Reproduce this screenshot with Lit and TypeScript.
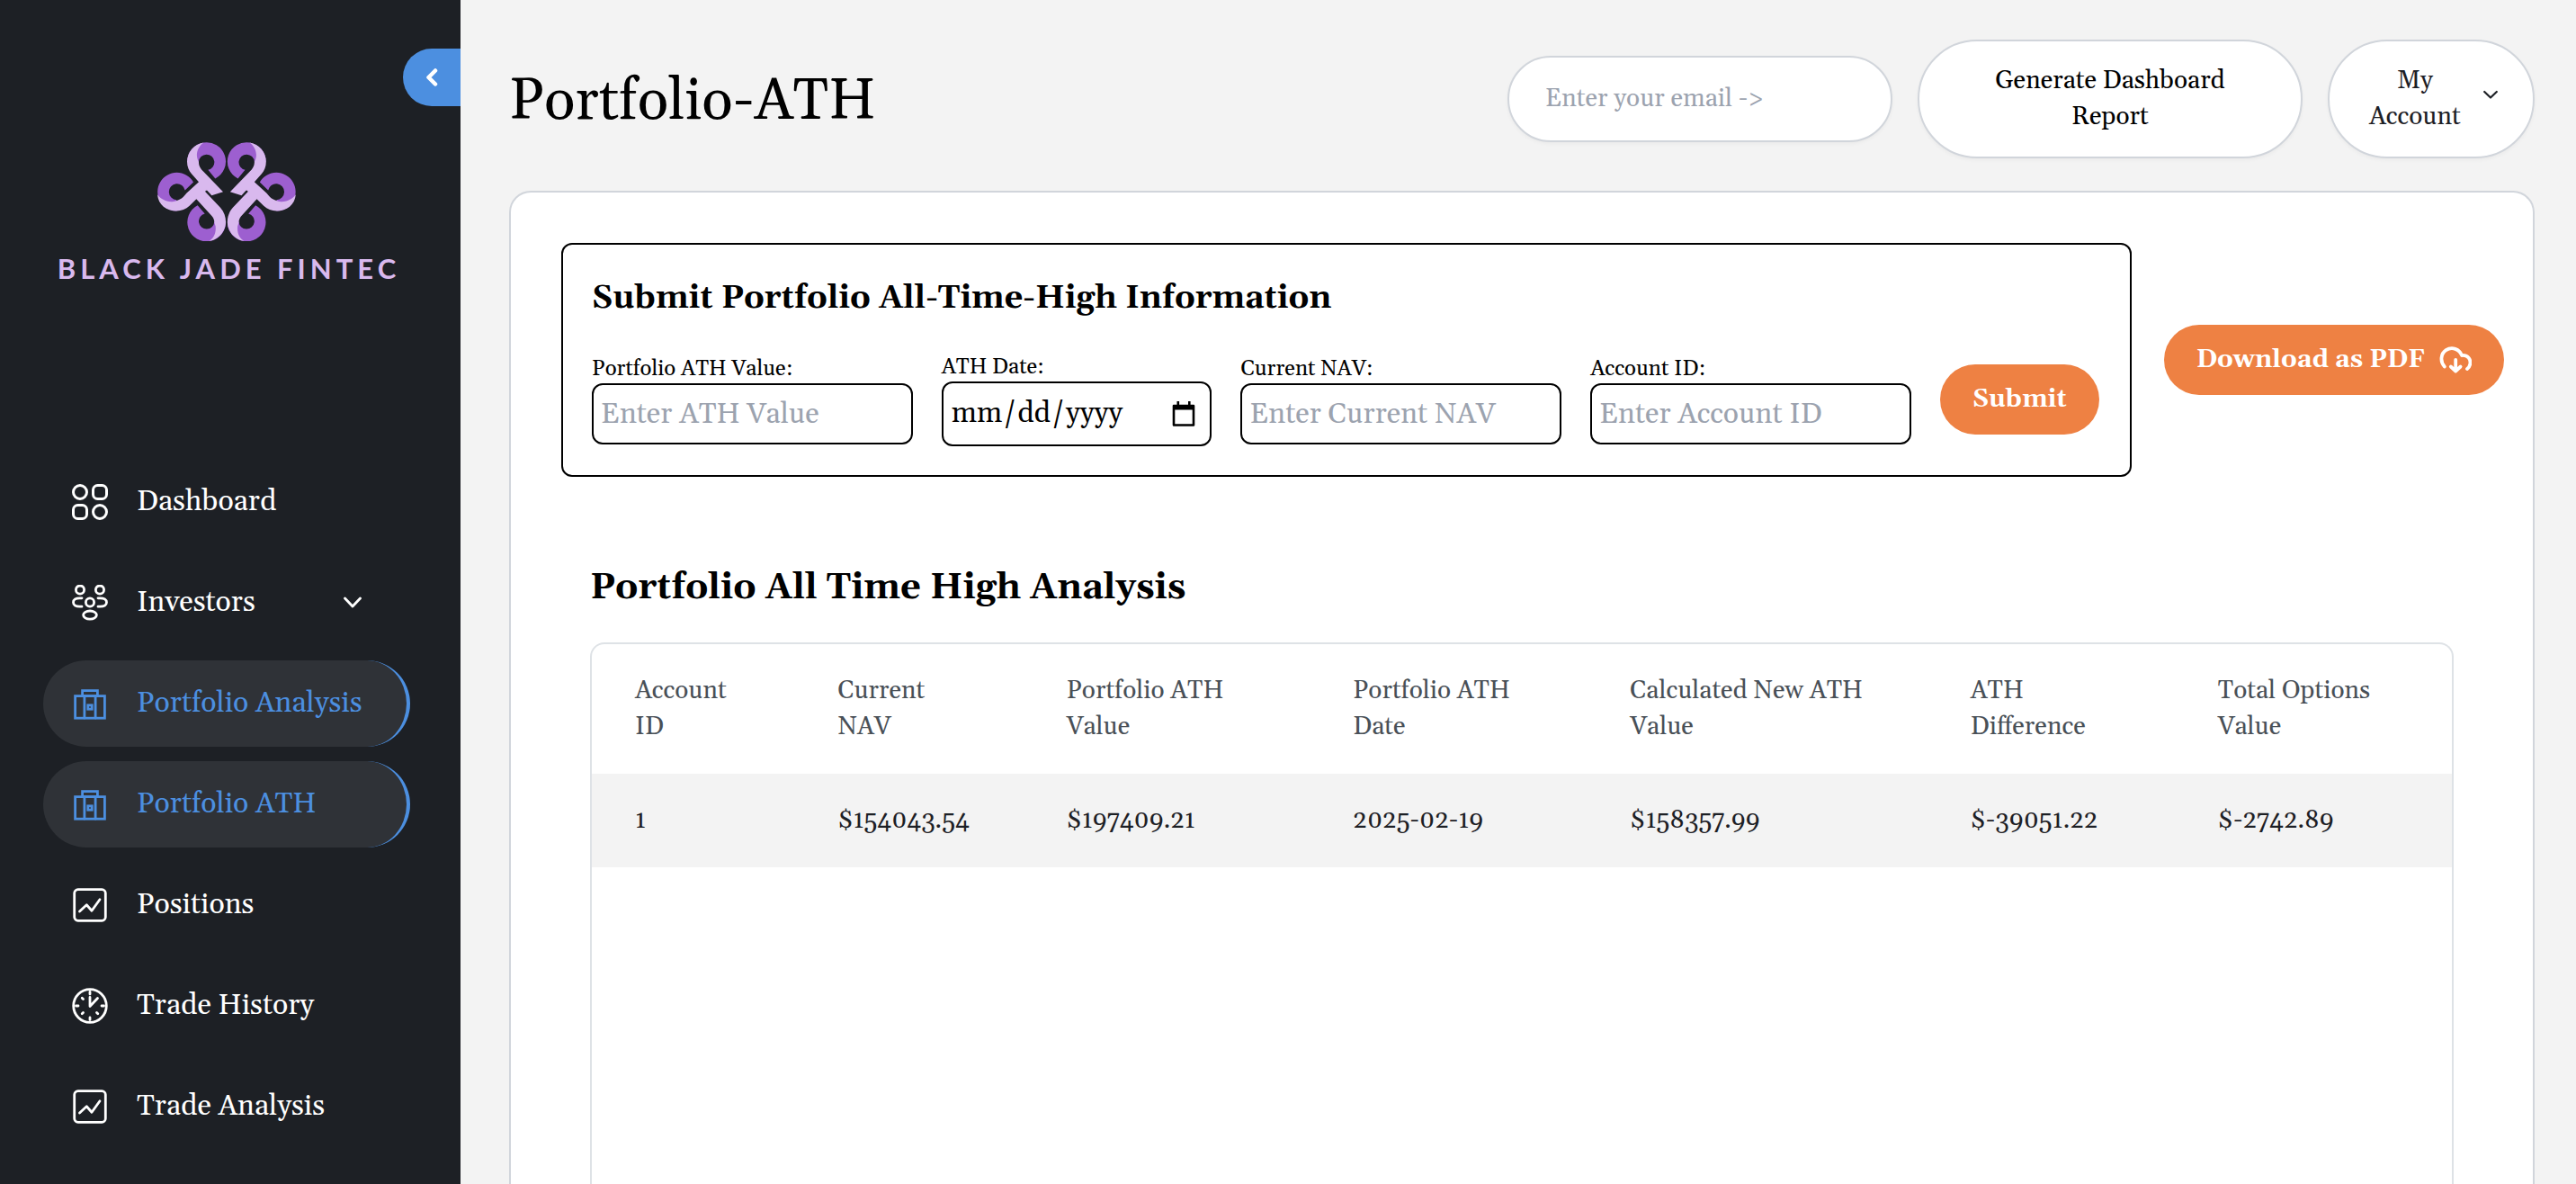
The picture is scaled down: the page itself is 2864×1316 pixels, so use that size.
import { LitElement, html, css, svg, nothing } from "lit";
import { customElement, state } from "lit/decorators.js";
import { classMap } from "lit/directives/class-map.js";

type IconName = "grid" | "people" | "briefcase" | "chart" | "clock";

interface NavItem {
  label: string;
  icon: IconName;
  active?: boolean;
  expandable?: boolean;
}

const NAV: NavItem[] = [
  { label: "Dashboard", icon: "grid" },
  { label: "Investors", icon: "people", expandable: true },
  { label: "Portfolio Analysis", icon: "briefcase", active: true },
  { label: "Portfolio ATH", icon: "briefcase", active: true },
  { label: "Positions", icon: "chart" },
  { label: "Trade History", icon: "clock" },
  { label: "Trade Analysis", icon: "chart" },
];

const ICONS = {
  grid: svg`
    <circle cx="9" cy="9" r="7.5"/>
    <rect x="23.5" y="1.5" width="15" height="15" rx="5"/>
    <rect x="1.5" y="23.5" width="15" height="15" rx="5"/>
    <circle cx="31" cy="31" r="7.5"/>`,
  people: svg`
    <circle cx="9" cy="5.6" r="4.6"/>
    <circle cx="31" cy="5.6" r="4.6"/>
    <circle cx="20" cy="19.5" r="4.6"/>
    <ellipse cx="20" cy="33.6" rx="7.4" ry="4.6"/>
    <path d="M11 14.8H8.5C4.5 14.8 1.5 16.5 1.5 19.5S4.5 24.2 8.5 24.2H11"/>
    <path d="M29 14.8H31.5C35.5 14.8 38.5 16.5 38.5 19.5S35.5 24.2 31.5 24.2H29"/>`,
  briefcase: svg`
    <rect x="3.6" y="11.6" width="32.8" height="24.6"/>
    <rect x="11.6" y="5.6" width="16.8" height="6"/>
    <path d="M13.9 11.6V36M26.1 11.6V36"/>
    <rect x="17.8" y="21.8" width="4.4" height="4.4"/>`,
  chart: svg`
    <rect x="2.7" y="2.7" width="34.6" height="34.6" rx="4"/>
    <path d="M8.5 27L16.3 19.8L22 26.2L31 13.8" stroke-linejoin="round"/>`,
  clock: svg`
    <circle cx="20" cy="20" r="18.3"/>
    <path d="M20 10.5V20.5L28.5 11.5" stroke-linejoin="round"/>
    <path d="M20 4.5V7M20 33V35.5M4.5 20H7M33 20H35.5M11.2 11.2L12.5 12.5M27.5 27.5L28.8 28.8M11.2 28.8L12.5 27.5"/>`,
};

const PETALS = svg`
  <path class="petal-dark" d="M175 119A64 64 0 1 1 268 175L244 146A26 26 0 1 0 213 119Z"/>
  <path class="petal-dark" d="M139 283A64 64 0 1 1 195 187L167 214A27 27 0 1 0 139 246Z"/>
  <path class="petal-dark" d="M209 264A64 64 0 1 0 303 319L265 319A26 26 0 1 1 233 292Z"/>
  <path class="petal-light" d="M229 55A65 65 0 0 0 174 119C174 136 180 149 189 159L213 186L172 224C164 234 158 241 150 244C144 246 136 253 122 252C100 250 86 242 75 228C78 262 105 283 139 283C155 283 170 277 182 266L205 243L257 300C262 306 265 312 265 322L269 334C271 356 264 372 248 383C280 378 303 350 303 319C303 303 298 287 285 272L235 219A4 4 0 0 1 241 215L256 231L294 219L228 151C219 142 212 132 213 119C200 98 208 70 229 55Z"/>`;

@customElement("side-nav")
export class SideNav extends LitElement {
  static styles = css`
    :host {
      display: flex;
      flex-direction: column;
      flex: 0 0 512px;
      box-sizing: border-box;
      padding-top: 54px;
      background: #1d2025;
      color: #fff;
      overflow: hidden;
    }
    .collapse {
      display: flex;
      align-items: center;
      justify-content: center;
      align-self: flex-end;
      width: 64px;
      height: 64px;
      padding: 0;
      border: 0;
      border-radius: 32px 0 0 32px;
      background: #4c8fe0;
      color: #fff;
    }
    .brand {
      display: flex;
      flex-direction: column;
      align-items: center;
      gap: 10px;
      padding: 40px 56px 0 48px;
      color: #d9b9ee;
      text-decoration: none;
    }
    .mark {
      width: 154px;
      height: 110px;
    }
    .petal-dark {
      fill: #9d5fd0;
    }
    .petal-light {
      fill: #d9b9ee;
    }
    .wordmark {
      padding-left: 5px;
      font: 700 31px/40px Lato, "Open Sans", sans-serif;
      letter-spacing: 5px;
      white-space: nowrap;
    }
    nav {
      display: flex;
      flex-direction: column;
      gap: 16px;
      padding: 192px 56px 0 48px;
    }
    .item {
      display: flex;
      align-items: center;
      gap: 32px;
      box-sizing: border-box;
      height: 96px;
      padding: 0 50px 0 32px;
      border-right: 4px solid transparent;
      border-radius: 48px;
      color: inherit;
      font-size: 32px;
      line-height: 48px;
      text-decoration: none;
      white-space: nowrap;
    }
    .item.active {
      background: #2f3237;
      border-right-color: #4c8fe0;
      color: #4c8fe0;
    }
    .label {
      flex: 1;
    }
    .icon {
      flex: none;
      width: 40px;
      height: 40px;
    }
    svg {
      display: block;
    }
  `;

  render() {
    return html`
      <button class="collapse" aria-label="Collapse sidebar">
        <svg width="14" height="20" viewBox="0 0 14 20" fill="none" stroke="currentColor" stroke-width="4.5" stroke-linecap="round" stroke-linejoin="round">
          <path d="M11 2.5L3.5 10L11 17.5"/>
        </svg>
      </button>
      <a class="brand" href="#">
        <svg class="mark" viewBox="75 54 462 329" aria-hidden="true">
          <g>${PETALS}</g>
          <g transform="translate(611.5 0) scale(-1 1)">${PETALS}</g>
        </svg>
        <span class="wordmark">BLACK JADE FINTEC</span>
      </a>
      <nav>
        ${NAV.map(
          (item) => html`
            <a class=${classMap({ item: true, active: !!item.active })} href="#">
              <svg class="icon" viewBox="0 0 40 40" fill="none" stroke="currentColor" stroke-width=${item.icon === "grid" ? 3 : 2.8} stroke-linecap="round" aria-hidden="true">
                ${ICONS[item.icon]}
              </svg>
              <span class="label">${item.label}</span>
              ${item.expandable
                ? html`<svg width="20" height="14" viewBox="0 0 20 14" fill="none" stroke="currentColor" stroke-width="2.8" stroke-linecap="round" stroke-linejoin="round" aria-hidden="true">
                    <path d="M1.5 2L10 11L18.5 2"/>
                  </svg>`
                : nothing}
            </a>
          `
        )}
      </nav>
    `;
  }
}

@customElement("page-header")
export class PageHeader extends LitElement {
  static styles = css`
    :host {
      display: flex;
      align-items: center;
      gap: 28px;
    }
    h1 {
      flex: 1;
      margin: 0;
      padding-top: 8px;
      font-size: 64px;
      font-weight: 400;
      line-height: 80px;
      white-space: nowrap;
    }
    .pill {
      box-sizing: border-box;
      border: 2px solid #d1d5db;
      border-radius: 66px;
      background: #fff;
      box-shadow: 0 2px 4px rgba(0, 0, 0, 0.04);
      color: #1d2025;
      font: inherit;
      font-size: 28px;
      line-height: 40px;
    }
    .email {
      width: 428px;
      height: 96px;
      padding: 0 40px;
      outline: none;
    }
    .email::placeholder {
      color: #9ca3af;
      opacity: 1;
    }
    .report {
      width: 428px;
      padding: 24px 64px;
      color: #000;
    }
    .account {
      display: flex;
      align-items: center;
      justify-content: space-between;
      width: 230px;
      padding: 24px 39px 24px 44px;
    }
    svg {
      display: block;
    }
  `;

  render() {
    return html`
      <h1>Portfolio-ATH</h1>
      <input class="pill email" type="email" aria-label="Email" placeholder="Enter your email ->" />
      <button class="pill report">Generate Dashboard Report</button>
      <button class="pill account">
        <span>My<br />Account</span>
        <svg width="16" height="20" viewBox="0 0 16 20" fill="none" stroke="currentColor" stroke-width="2.2" stroke-linecap="round" stroke-linejoin="round" aria-hidden="true">
          <path d="M1.2 2L8 8.5L14.8 2"/>
        </svg>
      </button>
    `;
  }
}

@customElement("ath-form")
export class AthForm extends LitElement {
  static styles = css`
    :host {
      display: flex;
      align-items: center;
      gap: 36px;
    }
    form {
      flex: 1;
      box-sizing: border-box;
      padding: 32px 34px 32px 32px;
      border: 2px solid #000;
      border-radius: 12px;
    }
    h2 {
      margin: 0 0 32px;
      font-size: 36px;
      font-weight: 700;
      line-height: 56px;
    }
    .fields {
      display: flex;
      align-items: center;
      gap: 32px;
    }
    .field {
      display: flex;
      flex-direction: column;
      flex: 356 1 0;
      min-width: 0;
    }
    .field.date {
      flex-grow: 300;
    }
    label {
      font-size: 24px;
      line-height: 32px;
    }
    input {
      box-sizing: border-box;
      width: 100%;
      height: 68px;
      padding: 0 8px;
      border: 2px solid #000;
      border-radius: 12px;
      background: #fff;
      color: #000;
      font: inherit;
      font-size: 32px;
      outline: none;
    }
    input::placeholder {
      color: #9ca3af;
      opacity: 1;
    }
    input[type="date"] {
      height: 72px;
      padding-right: 16px;
    }
    input::-webkit-calendar-picker-indicator {
      width: 26px;
      height: 28px;
      padding: 0;
      margin: 0;
      background: url("data:image/svg+xml,%3Csvg xmlns='http://www.w3.org/2000/svg' viewBox='0 0 26 28'%3E%3Cpath d='M2 5h22v21.5H2z' fill='none' stroke='black' stroke-width='2.6' stroke-linejoin='round'/%3E%3Cpath d='M2 4h22v5.500H2zM5.500 0h2.600v5H5.500zM18 0h2.600v5H18z'/%3E%3C/svg%3E") center / contain no-repeat;
    }
    button {
      display: flex;
      align-items: center;
      gap: 16px;
      height: 78px;
      padding: 0 36px;
      border: 0;
      border-radius: 39px;
      background: #ee8143;
      color: #fff;
      font: inherit;
      font-size: 28px;
      font-weight: 700;
      line-height: 40px;
      white-space: nowrap;
    }
    svg {
      display: block;
    }
  `;

  render() {
    return html`
      <form @submit=${(e: Event) => e.preventDefault()}>
        <h2>Submit Portfolio All-Time-High Information</h2>
        <div class="fields">
          <div class="field">
            <label for="ath">Portfolio ATH Value:</label>
            <input id="ath" type="text" placeholder="Enter ATH Value" />
          </div>
          <div class="field date">
            <label for="date">ATH Date:</label>
            <input id="date" type="date" />
          </div>
          <div class="field">
            <label for="nav">Current NAV:</label>
            <input id="nav" type="text" placeholder="Enter Current NAV" />
          </div>
          <div class="field">
            <label for="account">Account ID:</label>
            <input id="account" type="text" placeholder="Enter Account ID" />
          </div>
          <button type="submit">Submit</button>
        </div>
      </form>
      <button type="button">
        Download as PDF
        <svg width="36" height="32" viewBox="0 0 36 32" fill="none" stroke="currentColor" stroke-width="3.8" stroke-linecap="round" stroke-linejoin="round" aria-hidden="true">
          <path d="M5.8 23.5C0.5 17.5 1.8 9 7.5 5.2C14 1 22.5 3.8 25 11C31.5 10.5 35.3 15 34.3 20.5C33.9 22.8 32.8 24.5 31 26"/>
          <path d="M18.2 16V28M12.8 23.5L18.2 28.5L23.6 23.5"/>
        </svg>
      </button>
    `;
  }
}

interface AthRow {
  account: string;
  nav: string;
  athValue: string;
  athDate: string;
  newAth: string;
  difference: string;
  options: string;
}

@customElement("ath-table")
export class AthTable extends LitElement {
  @state() private rows: AthRow[] = [
    {
      account: "1",
      nav: "$154043.54",
      athValue: "$197409.21",
      athDate: "2025-02-19",
      newAth: "$158357.99",
      difference: "$-39051.22",
      options: "$-2742.89",
    },
  ];

  static styles = css`
    :host {
      display: flex;
      flex-direction: column;
      flex: 1;
      min-height: 0;
    }
    h2 {
      margin: 0 0 32px;
      font-size: 40px;
      font-weight: 700;
      line-height: 56px;
    }
    .frame {
      flex: 1;
      border: 2px solid #dee2e6;
      border-bottom: 0;
      border-radius: 16px 16px 0 0;
    }
    table {
      width: 100%;
      border-collapse: collapse;
      table-layout: fixed;
      font-size: 28px;
      line-height: 40px;
    }
    th,
    td {
      box-sizing: border-box;
      padding: 32px 0 32px 48px;
      text-align: left;
      font-weight: 400;
      white-space: nowrap;
    }
    th {
      color: #495057;
    }
    td {
      color: #1d2025;
    }
    tbody tr {
      background: #f3f3f3;
    }
    .account {
      width: 10.9%;
    }
    .nav {
      width: 12.3%;
    }
    .value {
      width: 15.4%;
    }
    .date {
      width: 14.9%;
    }
    .new {
      width: 18.3%;
    }
    .difference {
      width: 13.3%;
    }
  `;

  render() {
    return html`
      <h2>Portfolio All Time High Analysis</h2>
      <div class="frame">
        <table>
          <thead>
            <tr>
              <th class="account">Account<br />ID</th>
              <th class="nav">Current<br />NAV</th>
              <th class="value">Portfolio ATH<br />Value</th>
              <th class="date">Portfolio ATH<br />Date</th>
              <th class="new">Calculated New ATH<br />Value</th>
              <th class="difference">ATH<br />Difference</th>
              <th>Total Options<br />Value</th>
            </tr>
          </thead>
          <tbody>
            ${this.rows.map(
              (r) => html`<tr>
                <td>${r.account}</td>
                <td>${r.nav}</td>
                <td>${r.athValue}</td>
                <td>${r.athDate}</td>
                <td>${r.newAth}</td>
                <td>${r.difference}</td>
                <td>${r.options}</td>
              </tr>`
            )}
          </tbody>
        </table>
      </div>
    `;
  }
}

@customElement("app-root")
export class AppRoot extends LitElement {
  static styles = css`
    :host {
      display: flex;
      height: 100vh;
      overflow: hidden;
      background: #f3f3f3;
      color: #000;
      font-family: Gelasio, Georgia, "Liberation Serif", serif;
      font-size: 28px;
      line-height: 40px;
    }
    main {
      display: flex;
      flex-direction: column;
      flex: 1;
      gap: 36px;
      min-width: 0;
      padding: 44px 46px 0 54px;
    }
    .card {
      display: flex;
      flex-direction: column;
      flex: 1;
      gap: 96px;
      min-height: 0;
      padding: 56px 32px 0 56px;
      border: 2px solid #d1d5db;
      border-bottom: 0;
      border-radius: 24px 24px 0 0;
      background: #fff;
    }
    .analysis {
      display: flex;
      flex: 1;
      min-height: 0;
      padding: 0 56px 0 32px;
    }
  `;

  render() {
    return html`
      <side-nav></side-nav>
      <main>
        <page-header></page-header>
        <section class="card">
          <ath-form></ath-form>
          <div class="analysis"><ath-table></ath-table></div>
        </section>
      </main>
    `;
  }
}
